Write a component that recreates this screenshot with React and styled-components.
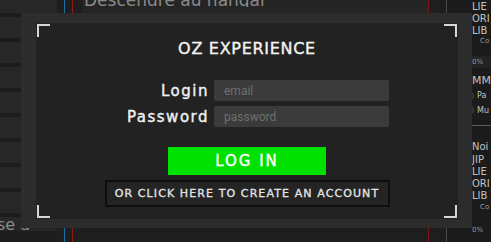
import React from "react";
import styled, { createGlobalStyle } from "styled-components";

const GlobalStyle = createGlobalStyle`
  html, body {
    margin: 0;
    padding: 0;
    background: #1b1b1b;
  }
  body {
    font-family: "DejaVu Sans", "Liberation Sans", sans-serif;
    overflow: hidden;
  }
`;

const Screen = styled.div`
  position: relative;
  width: 491px;
  height: 242px;
  display: flex;
  overflow: hidden;
  background: #1b1b1b;
`;

// background game ui ------------------------------------------

const RowStrip = styled.div`
  width: 57px;
  flex: none;
  display: flex;
  flex-direction: column;
  background: #1d1d1d;
`;

const StripRow = styled.div`
  height: ${(p) => p.$h}px;
  flex: none;
  box-sizing: border-box;
  border-top: ${(p) => (p.$first ? "none" : "4px solid #1c1c1c")};
  background: #272727;
  color: #8c8c8c;
  font-size: 16px;
  line-height: 16px;
  white-space: nowrap;
  overflow: hidden;
  text-indent: -3px;
`;

const Lanes = styled.div`
  width: 25px;
  flex: none;
  display: flex;
  gap: 7px;
  padding-left: 7px;
  box-sizing: border-box;
  background: #1e1e1e;
`;

const Lane = styled.div`
  width: 1px;
  background: ${(p) => p.$color};
`;

const Center = styled.div`
  flex: 1;
  display: flex;
  flex-direction: column;
  background: #1e1e1e;
`;

const TopBar = styled.div`
  height: 13px;
  flex: none;
  background: #252525;
  padding-left: 2px;
  box-sizing: border-box;
`;

const TopTitle = styled.div`
  height: 7px;
  overflow: hidden;
  color: #8a8a8a;
  font-size: 17px;
  line-height: 17px;
  white-space: nowrap;

  span {
    display: block;
    margin-top: -8px;
  }
`;

const Divider = styled.div`
  width: 1px;
  flex: none;
  background: ${(p) => p.$color};
`;

const Gutter = styled.div`
  width: 17px;
  flex: none;
  background: #1e1e1e;
`;

const RightPanel = styled.div`
  width: 44px;
  flex: none;
  display: flex;
  flex-direction: column;
  background: #1b1b1b;
`;

const RightItem = styled.div`
  height: ${(p) => p.$h}px;
  flex: none;
  display: flex;
  align-items: center;
  gap: 3px;
  padding-left: ${(p) => 25 + (p.$indent || 0)}px;
  background: ${(p) => p.$bg || "transparent"};
  color: ${(p) => p.$color || "#c2c2c2"};
  font-size: ${(p) => p.$size || 10}px;
  white-space: nowrap;
`;

const Radio = styled.span`
  width: 6px;
  height: 6px;
  flex: none;
  border: 1px solid #4c4c4c;
  border-radius: 50%;
  margin-left: -6px;
`;

const Rule = styled.div`
  height: 1px;
  flex: none;
  background: #5a5a5a;
`;

const Space = styled.div`
  height: ${(p) => p.$h}px;
  flex: none;
  background: ${(p) => p.$bg || "transparent"};
`;

// login modal --------------------------------------------------

const Overlay = styled.div`
  position: absolute;
  left: 21px;
  top: 13px;
  width: 451px;
  height: 215px;
  box-sizing: border-box;
  padding: 10px 14px 9px 15px;
  background: #2c2c2c;
  display: flex;
`;

const Frame = styled.div`
  position: relative;
  flex: 1;
  display: flex;
  flex-direction: column;
  align-items: center;
  background: #222222;
`;

const cornerBorders = {
  tl: "border-width: 2px 0 0 2px; top: 1px; left: 1px;",
  tr: "border-width: 2px 2px 0 0; top: 1px; right: 1px;",
  bl: "border-width: 0 0 2px 2px; bottom: 1px; left: 1px;",
  br: "border-width: 0 2px 2px 0; bottom: 1px; right: 1px;",
};

const Corner = styled.span`
  position: absolute;
  width: 13px;
  height: 13px;
  box-sizing: border-box;
  border-style: solid;
  border-color: #d6d6d6;
  ${(p) => cornerBorders[p.$at]}
`;

const Title = styled.h1`
  margin: 17px 0 0;
  font-size: 16px;
  line-height: 18px;
  font-weight: normal;
  letter-spacing: 0.7px;
  color: #f2f2f2;
  -webkit-text-stroke: 0.4px #f2f2f2;
`;

const Form = styled.div`
  align-self: flex-start;
  margin-top: 22px;
  display: grid;
  grid-template-columns: 172px 175px;
  column-gap: 6px;
  row-gap: 5px;
  align-items: center;
`;

const Label = styled.label`
  text-align: right;
  font-size: 15px;
  letter-spacing: 1.5px;
  margin-right: -1px;
  color: #f0f0f0;
  -webkit-text-stroke: 0.4px #f0f0f0;
`;

const Input = styled.input`
  height: 21px;
  box-sizing: border-box;
  border: none;
  border-radius: 2px;
  padding: 0 10px;
  background: #3a3b3a;
  color: #ddd;
  font-family: Roboto, "Liberation Sans", sans-serif;
  font-size: 12px;
  outline: none;

  &::placeholder {
    color: #6f6f6f;
  }
`;

const Button = styled.button`
  box-sizing: border-box;
  width: ${(p) => p.$w}px;
  height: ${(p) => p.$h}px;
  margin-top: ${(p) => p.$top}px;
  padding: 0;
  border: ${(p) => (p.$primary ? "none" : "2px solid #0e0e0e")};
  background: ${(p) => (p.$primary ? "#00e100" : "#242424")};
  color: ${(p) => (p.$primary ? "#ffffff" : "#e4e4e4")};
  font-family: "DejaVu Sans", "Liberation Sans", sans-serif;
  font-size: ${(p) => (p.$primary ? 15 : 11)}px;
  letter-spacing: ${(p) => (p.$primary ? 2 : 1.1)}px;
  -webkit-text-stroke: ${(p) => (p.$primary ? 0.4 : 0.3)}px currentColor;
  cursor: pointer;
`;

const stripRows = [13, 25, 25, 25, 25, 25, 25, 25, 25, 18];

export default function App() {
  return (
    <>
      <GlobalStyle />
      <Screen>
        <RowStrip>
          {stripRows.map((h, i) => (
            <StripRow key={i} $h={h} $first={i === 0}>
              {i === stripRows.length - 1 ? "se a" : ""}
            </StripRow>
          ))}
        </RowStrip>
        <Lanes>
          <Lane $color="#1f6fa6" />
          <Lane $color="#8e1b1b" />
        </Lanes>
        <Center>
          <TopBar>
            <TopTitle>
              <span>Descendre au hangar</span>
            </TopTitle>
          </TopBar>
        </Center>
        <Divider $color="#7d1717" />
        <Gutter />
        <Divider $color="#4a4a4a" />
        <RightPanel>
          <RightItem $h={12}>LIE</RightItem>
          <RightItem $h={12}>ORI</RightItem>
          <RightItem $h={12}>LIB</RightItem>
          <RightItem $h={10} $size={7} $indent={8} $color="#9a9a9a">Co</RightItem>
          <Space $h={10} />
          <RightItem $h={12} $size={7} $color="#9a9a9a" $bg="#232323">0%</RightItem>
          <Space $h={4} />
          <RightItem $h={16} $size={11}>MM</RightItem>
          <RightItem $h={15} $size={8}><Radio />Pa</RightItem>
          <RightItem $h={14} $size={8}><Radio />Mu</RightItem>
          <Space $h={8} />
          <Rule />
          <Space $h={14} />
          <RightItem $h={13}>Noi</RightItem>
          <RightItem $h={12}>JIP</RightItem>
          <RightItem $h={12}>LIE</RightItem>
          <RightItem $h={12}>ORI</RightItem>
          <RightItem $h={12}>LIB</RightItem>
          <RightItem $h={12} $size={7} $indent={8} $color="#9a9a9a">Co</RightItem>
          <Space $h={11} />
          <RightItem $h={12} $size={7} $color="#9a9a9a">0%</RightItem>
        </RightPanel>

        <Overlay>
          <Frame>
            <Corner $at="tl" />
            <Corner $at="tr" />
            <Corner $at="bl" />
            <Corner $at="br" />
            <Title>OZ EXPERIENCE</Title>
            <Form>
              <Label htmlFor="login-email">Login</Label>
              <Input id="login-email" type="email" placeholder="email" />
              <Label htmlFor="login-password">Password</Label>
              <Input id="login-password" type="password" placeholder="password" />
            </Form>
            <Button $primary $w={158} $h={28} $top={20}>LOG IN</Button>
            <Button $w={285} $h={27} $top={5}>OR CLICK HERE TO CREATE AN ACCOUNT</Button>
          </Frame>
        </Overlay>
      </Screen>
    </>
  );
}
